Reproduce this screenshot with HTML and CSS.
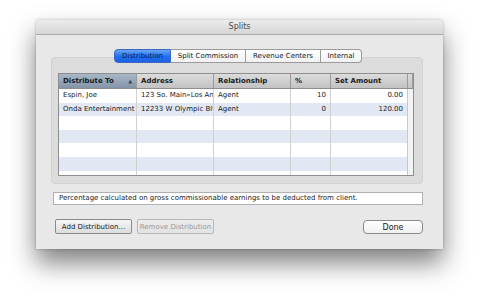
FILE: index.html
```html
<!DOCTYPE html>
<html lang="en">

<head>
  <meta charset="UTF-8">
  <title>Splits</title>
  <link rel="stylesheet" href="styles.css">
</head>

<body>
  <div class="window">
    <div class="titlebar">Splits</div>

    <div class="content">
      <div class="tabs">
        <button class="tab active">Distribution</button>
        <button class="tab">Split Commission</button>
        <button class="tab">Revenue Centers</button>
        <button class="tab">Internal</button>
      </div>

      <div class="group">
        <div class="table">
          <div class="row head">
            <div class="cell c1 sorted">Distribute To <span class="arrow">▲</span></div>
            <div class="cell c2">Address</div>
            <div class="cell c3">Relationship</div>
            <div class="cell c4">%</div>
            <div class="cell c5">Set Amount</div>
            <div class="cell c6"></div>
          </div>
          <div class="body">
            <div class="row">
              <div class="cell c1">Espin, Joe</div>
              <div class="cell c2">123 So. Main»Los Angeles</div>
              <div class="cell c3">Agent</div>
              <div class="cell c4 num">10</div>
              <div class="cell c5 num">0.00</div>
            </div>
            <div class="row">
              <div class="cell c1">Onda Entertainment</div>
              <div class="cell c2">12233 W Olympic Blvd</div>
              <div class="cell c3">Agent</div>
              <div class="cell c4 num">0</div>
              <div class="cell c5 num">120.00</div>
            </div>
            <div class="row"><div class="cell c1"></div><div class="cell c2"></div><div class="cell c3"></div><div class="cell c4"></div><div class="cell c5"></div></div>
            <div class="row"><div class="cell c1"></div><div class="cell c2"></div><div class="cell c3"></div><div class="cell c4"></div><div class="cell c5"></div></div>
            <div class="row"><div class="cell c1"></div><div class="cell c2"></div><div class="cell c3"></div><div class="cell c4"></div><div class="cell c5"></div></div>
            <div class="row"><div class="cell c1"></div><div class="cell c2"></div><div class="cell c3"></div><div class="cell c4"></div><div class="cell c5"></div></div>
            <div class="row"><div class="cell c1"></div><div class="cell c2"></div><div class="cell c3"></div><div class="cell c4"></div><div class="cell c5"></div></div>
          </div>
        </div>
      </div>

      <div class="note">Percentage calculated on gross commissionable earnings to be deducted from client.</div>

      <div class="buttons">
        <button class="btn">Add Distribution...</button>
        <button class="btn" disabled>Remove Distribution</button>
        <button class="btn done">Done</button>
      </div>
    </div>
  </div>
</body>

</html>
```

FILE: styles.css
```css
html,
body {
  margin: 0;
  padding: 0;
  height: 100%;
  overflow: hidden;
  background: #fff;
  font-family: "DejaVu Sans", sans-serif;
  font-size: 7px;
  color: #1a1a1a;
}

body {
  box-sizing: border-box;
  padding: 20px 37px 0 36px;
}

.window {
  height: 229px;
  background: #e8e8e8;
  box-shadow: 0 14px 26px rgba(0, 0, 0, 0.5), 0 0 3px rgba(0, 0, 0, 0.25);
  border-radius: 3px 3px 0 0;
  display: flex;
  flex-direction: column;
}

.titlebar {
  height: 14px;
  line-height: 14px;
  text-align: center;
  font-size: 8px;
  color: #4a4a4a;
  background: linear-gradient(#ececec, #d6d6d6);
  border-bottom: 1px solid #a8a8a8;
  border-radius: 3px 3px 0 0;
}

.content {
  padding: 14px 20px 0 15px;
  display: flex;
  flex-direction: column;
}

/* tabs */
.tabs {
  display: flex;
  justify-content: center;
  margin-left: 2px;
  position: relative;
  z-index: 1;
}

.tab {
  font: inherit;
  height: 14px;
  padding: 0;
  border: 1px solid #9b9b9b;
  border-left: none;
  background: linear-gradient(#ffffff, #f1f1f1);
  color: #222;
  width: 75px;
}

.tab:first-child {
  width: 57px;
  border-left: 1px solid #5a7fc8;
  border-radius: 4px 0 0 4px;
}

.tab:last-child {
  width: 41px;
  border-radius: 0 4px 4px 0;
}

.tab.active {
  background: linear-gradient(#6aa6f8, #1f6ff0 55%, #1d62e0);
  border-color: #3a66c4;
  color: #0b1d4a;
}

/* group box */
.group {
  margin-top: -6px;
  height: 110px;
  padding: 15px 8px 0 6px;
  background: #dcdcdc;
  border: 1px solid #d2d2d2;
  border-radius: 4px;
}

.table {
  height: 101px;
  border: 1px solid #8e8e8e;
  background: #fff;
  overflow: hidden;
}

.row {
  display: flex;
  height: 13.6px;
  line-height: 13.6px;
}

.body .row:nth-child(even) {
  background: #e1e7f3;
}

.cell {
  padding: 0 4px;
  border-right: 1px solid #d0d0d0;
  white-space: nowrap;
  overflow: hidden;
  box-sizing: border-box;
}

.c1 { width: 78px; }
.c2 { width: 77px; }
.c3 { width: 77px; }
.c4 { width: 40px; }
.c5 { width: 77px; border-right-color: #c8c8c8; }
.c6 { flex: 1; padding: 0; border-right: none; }

.body {
  height: 87px;
  background: linear-gradient(to right, transparent 349px, #f3f3f3 349px);
}

.body .row {
  width: 349px;
}

.num {
  text-align: right;
}

.head {
  height: 14px;
  line-height: 14px;
  font-weight: bold;
  background: linear-gradient(#dcdcdc, #c2c2c2);
  border-bottom: 1px solid #8e8e8e;
}

.head .cell {
  border-right: 1px solid #9a9a9a;
}

.head .sorted {
  background: linear-gradient(#a9b8c8, #8494a8);
  display: flex;
  justify-content: space-between;
}

.arrow {
  font-size: 5px;
  color: #3a4450;
}

/* note field */
.note {
  margin: 8px 0 0 2px;
  height: 11px;
  line-height: 11px;
  padding: 0 5px;
  background: #fff;
  border: 1px solid #b0b0b0;
}

/* buttons */
.buttons {
  display: flex;
  align-items: flex-start;
  gap: 5px;
  margin: 14px 0 0 4px;
}

.btn {
  font: inherit;
  width: 77px;
  height: 15px;
  padding: 0;
  border: 1px solid #8a8a8a;
  border-radius: 2px;
  background: linear-gradient(#f6f6f6, #dcdcdc);
  color: #1a1a1a;
}

.btn:disabled {
  color: #9a9a9a;
  border-color: #b8b8b8;
  background: linear-gradient(#ececec, #e2e2e2);
}

.btn.done {
  margin: 1px 0 0 auto;
  width: 60px;
  height: 14px;
  font-size: 8px;
  border-radius: 4px;
  background: linear-gradient(#ffffff, #f0f0f0);
}
```
